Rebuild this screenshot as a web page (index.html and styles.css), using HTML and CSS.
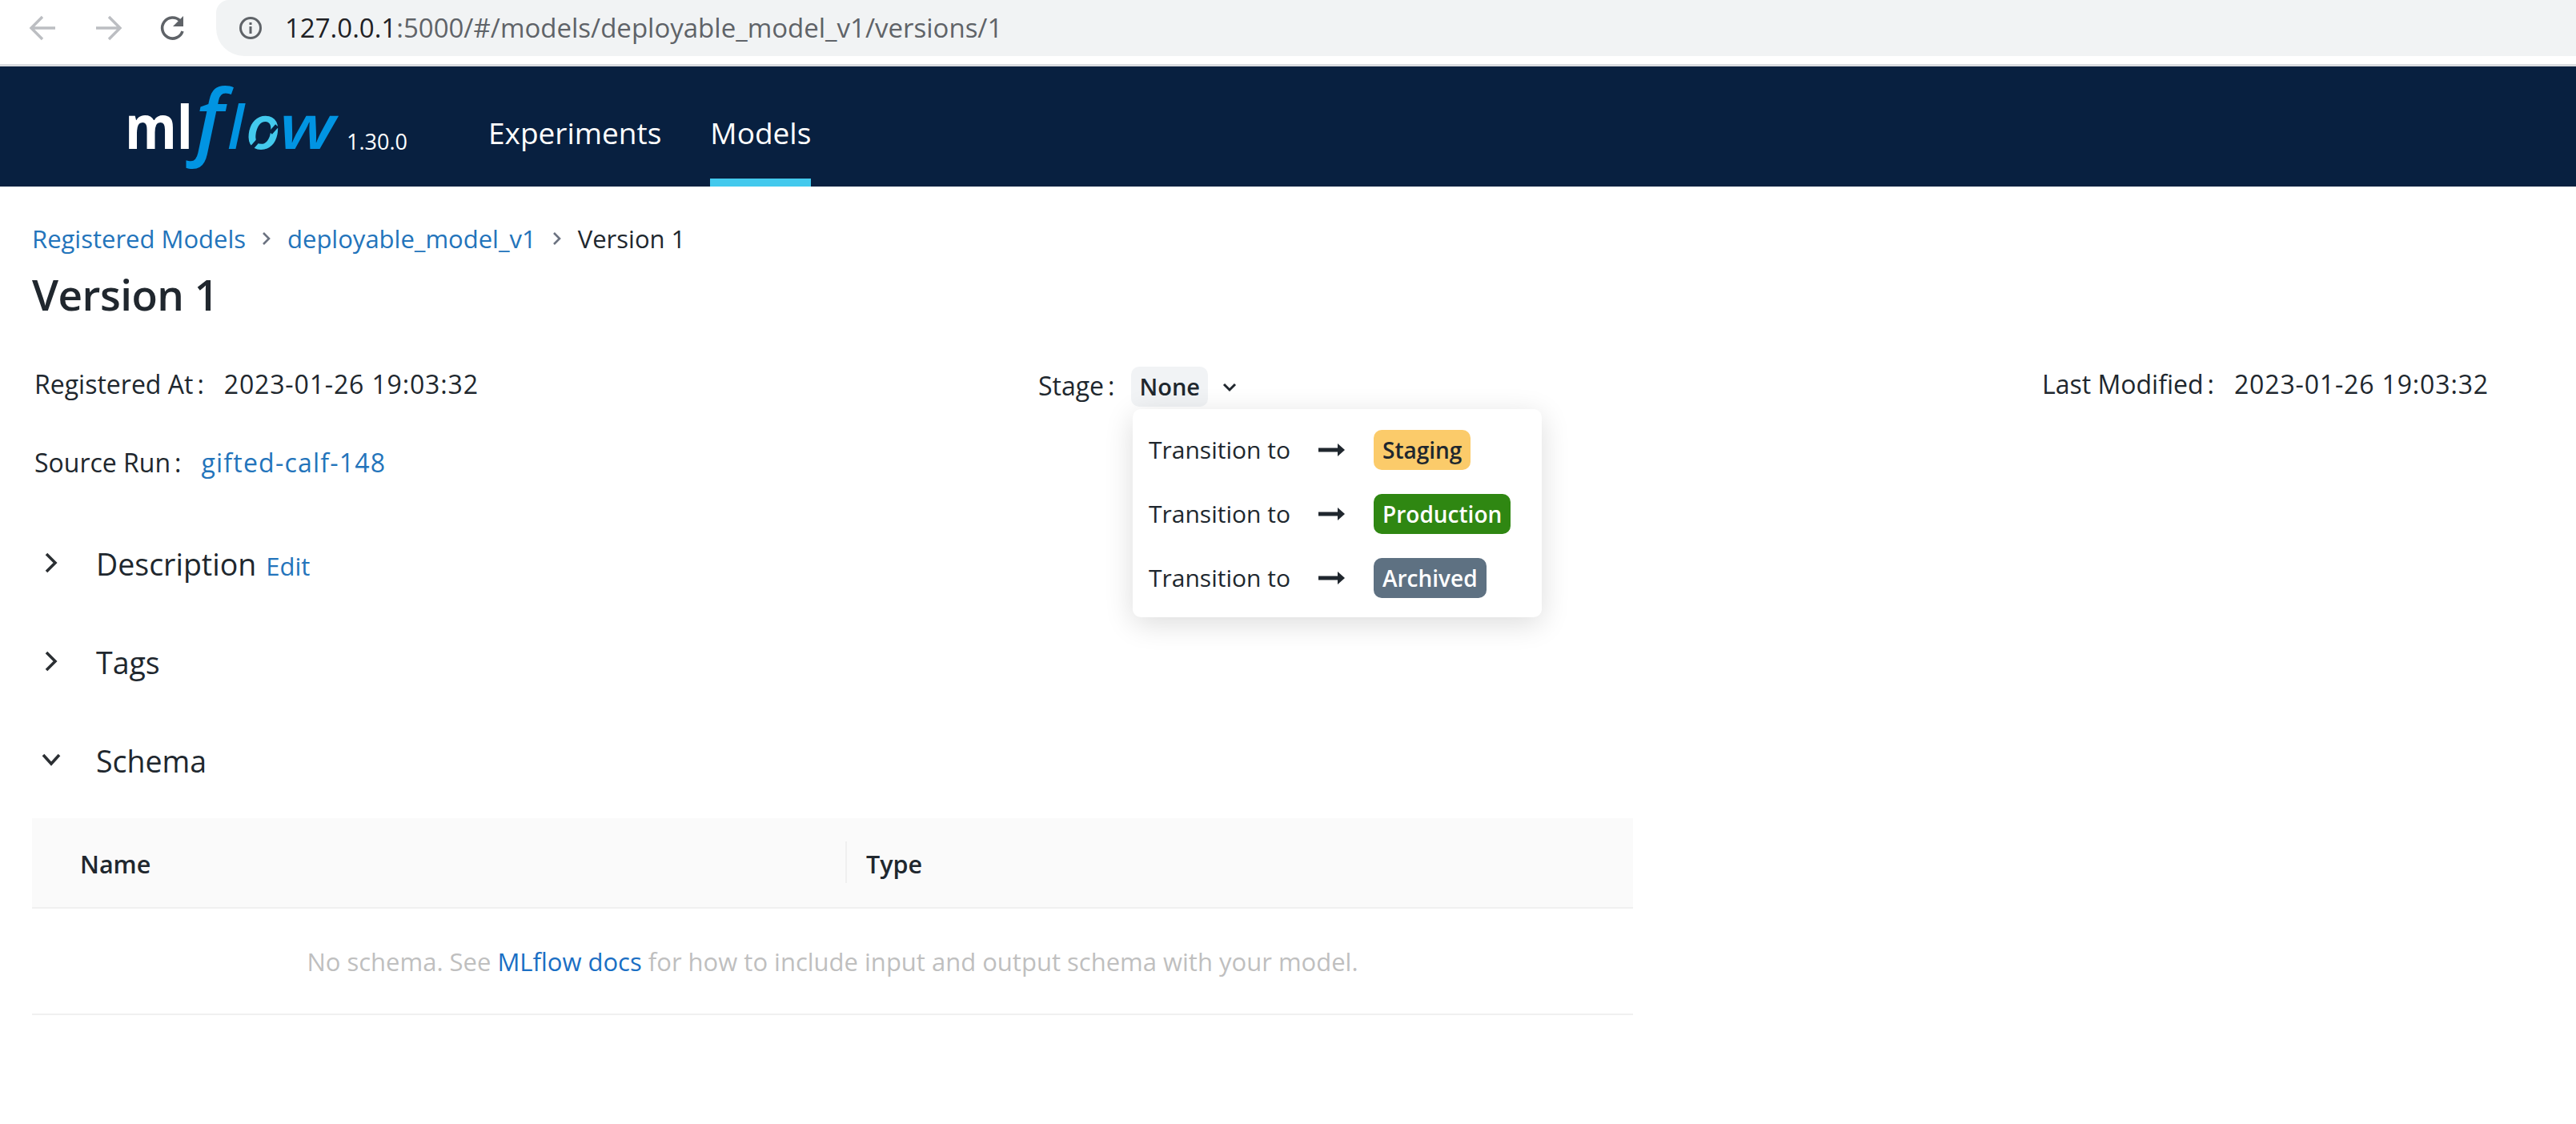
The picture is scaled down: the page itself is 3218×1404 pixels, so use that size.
FILE: index.html
```html
<!DOCTYPE html>
<html>
<head>
  <title>MLflow</title>
  <link rel="stylesheet" href="styles.css">
</head>
<body>
  <div class="chrome">
    <div class="chrome-buttons">
      <svg class="chrome-icon" width="40" height="40" viewBox="0 0 40 40"><path d="M35 20H6M19 6L5 20l14 14" fill="none" stroke="#bcbec2" stroke-width="3.4"/></svg>
      <svg class="chrome-icon" width="40" height="40" viewBox="0 0 40 40"><path d="M5 20h29M21 6l14 14-14 14" fill="none" stroke="#bcbec2" stroke-width="3.4"/></svg>
      <svg class="chrome-icon" width="40" height="40" viewBox="0 0 40 40"><path d="M32 24a13 13 0 1 1-3-13" fill="none" stroke="#5f6368" stroke-width="3.6"/><path d="M33 5v13H20z" fill="#5f6368"/></svg>
    </div>
    <div class="address">
      <svg class="info" width="30" height="30" viewBox="0 0 30 30"><circle cx="15" cy="15" r="12.5" fill="none" stroke="#5f6368" stroke-width="3"/><path d="M15 13v9M15 8v3" stroke="#5f6368" stroke-width="3"/></svg>
      <span class="url"><span class="host">127.0.0.1</span>:5000/#/models/deployable_model_v1/versions/1</span>
    </div>
  </div>

  <header class="nav">
    <div class="logo">
      <svg width="270" height="110" viewBox="0 0 270 110">
        <text class="logo-ml" x="-4" y="83" textLength="85" lengthAdjust="spacingAndGlyphs">ml</text>
        <text class="logo-f" x="84" y="83">f</text>
        <text class="logo-flow" x="124" y="83">l</text>
        <text class="logo-o" x="147" y="83">o</text>
        <text class="logo-flow" x="189" y="83" textLength="70" lengthAdjust="spacingAndGlyphs">w</text>
        <path d="M186 54l-8 9M163 72l-8 9" stroke="#082040" stroke-width="5"/>
      </svg>
      <span class="version">1.30.0</span>
    </div>
    <a class="nav-link">Experiments</a>
    <a class="nav-link nav-active">Models</a>
  </header>

  <main class="page">
    <div class="crumbs">
      <a class="link">Registered Models</a>
      <svg class="crumb-sep" width="12" height="18" viewBox="0 0 12 18"><path d="M2 2l7 7-7 7" fill="none" stroke="#6b7280" stroke-width="2.6"/></svg>
      <a class="link">deployable_model_v1</a>
      <svg class="crumb-sep" width="12" height="18" viewBox="0 0 12 18"><path d="M2 2l7 7-7 7" fill="none" stroke="#6b7280" stroke-width="2.6"/></svg>
      <span>Version 1</span>
    </div>
    <h1 class="title">Version 1</h1>

    <div class="meta">
      <div class="meta-item">Registered At<span class="colon">:</span><span class="date">2023-01-26 19:03:32</span></div>
      <div class="meta-item stage">
        Stage<span class="colon">:</span><span class="stage-chip">None</span>
        <svg class="stage-caret" width="18" height="12" viewBox="0 0 18 12"><path d="M2 2l7 7 7-7" fill="none" stroke="#20272e" stroke-width="3"/></svg>
        <div class="menu">
          <div class="menu-item">
            <span class="menu-label">Transition to</span>
            <svg class="menu-arrow" width="34" height="18" viewBox="0 0 34 18"><path d="M0 9h26" stroke="#20272e" stroke-width="5"/><path d="M24 1l9 8-9 8z" fill="#20272e"/></svg>
            <span class="tag tag-staging">Staging</span>
          </div>
          <div class="menu-item">
            <span class="menu-label">Transition to</span>
            <svg class="menu-arrow" width="34" height="18" viewBox="0 0 34 18"><path d="M0 9h26" stroke="#20272e" stroke-width="5"/><path d="M24 1l9 8-9 8z" fill="#20272e"/></svg>
            <span class="tag tag-production">Production</span>
          </div>
          <div class="menu-item">
            <span class="menu-label">Transition to</span>
            <svg class="menu-arrow" width="34" height="18" viewBox="0 0 34 18"><path d="M0 9h26" stroke="#20272e" stroke-width="5"/><path d="M24 1l9 8-9 8z" fill="#20272e"/></svg>
            <span class="tag tag-archived">Archived</span>
          </div>
        </div>
      </div>
      <div class="meta-item">Last Modified<span class="colon">:</span><span class="date">2023-01-26 19:03:32</span></div>
    </div>
    <div class="meta-item source">Source Run<span class="colon">:</span><a class="link run">gifted-calf-148</a></div>

    <section class="section section-first">
      <svg class="section-icon" width="24" height="26" viewBox="0 0 24 26"><path d="M6 2l11 11L6 24" fill="none" stroke="#2b2f33" stroke-width="3.6"/></svg>
      <span class="section-name">Description</span><a class="link edit">Edit</a>
    </section>
    <section class="section">
      <svg class="section-icon" width="24" height="26" viewBox="0 0 24 26"><path d="M6 2l11 11L6 24" fill="none" stroke="#2b2f33" stroke-width="3.6"/></svg>
      <span class="section-name">Tags</span>
    </section>
    <section class="section">
      <svg class="section-icon" width="24" height="26" viewBox="0 0 24 26"><path d="M2 7l10 11L22 7" fill="none" stroke="#2b2f33" stroke-width="3.6"/></svg>
      <span class="section-name">Schema</span>
    </section>

    <div class="schema">
      <div class="schema-head">
        <div class="schema-name">Name</div>
        <div class="schema-type">Type</div>
      </div>
      <div class="schema-empty">No schema. See <a class="docs">MLflow docs</a> for how to include input and output schema with your model.</div>
    </div>
  </main>
</body>
</html>
```

FILE: styles.css
```css
html, body {
  height: 100%;
}

body {
  margin: 0;
  background: white;
  color: #20272e;
  font-family: "Open Sans", "Liberation Sans", sans-serif;
  font-size: 32px;
  line-height: 44px;
}

/* browser bar */
.chrome {
  display: flex;
  height: 80px;
  border-bottom: 3px solid #dadce0;
}

.chrome-buttons {
  display: flex;
  gap: 41px;
  width: 270px;
  height: 70px;
  padding-left: 34px;
  box-sizing: border-box;
  align-items: center;
}

.chrome-icon {
  flex: none;
}

.address {
  display: flex;
  flex: 1;
  height: 70px;
  align-items: center;
  padding-left: 28px;
  background: #f1f3f4;
  border-radius: 16px 0 0 35px;
}

.url {
  margin-left: 28px;
  color: #5f6368;
  font-size: 33px;
}

.host {
  color: #202124;
}

/* nav */
.nav {
  display: flex;
  height: 150px;
  padding-left: 160px;
  background: #082040;
  color: white;
  box-sizing: border-box;
}

.logo {
  display: flex;
  width: 450px;
  align-items: center;
}

.logo svg {
  flex: none;
  overflow: visible;
}

.logo-ml {
  fill: white;
  font-size: 76px;
  font-weight: 700;
}

.logo-f {
  fill: #0194e2;
  font-size: 104px;
  font-weight: 600;
  font-style: italic;
}

.logo-flow {
  fill: #0194e2;
  font-size: 76px;
  font-weight: 600;
  font-style: italic;
}

.logo-o {
  fill: #43c9ed;
  font-size: 76px;
  font-weight: 600;
  font-style: italic;
}

.version {
  margin-top: 38px;
  margin-left: 3px;
  font-size: 27px;
}

.nav-link {
  height: 150px;
  margin-right: 61px;
  padding-top: 16px;
  font-size: 37px;
  line-height: 134px;
  box-sizing: border-box;
}

.nav-active {
  border-bottom: 10px solid #43c9ed;
}

/* page */
.page {
  padding: 43px 0 0 40px;
}

.link {
  color: #2374bb;
}

.crumbs {
  display: flex;
  align-items: center;
  font-size: 31px;
}

.crumb-sep {
  margin: 0 20px;
}

.title {
  margin: 16px 0 0;
  font-size: 53px;
  font-weight: 600;
  letter-spacing: -0.5px;
  line-height: 64px;
}

.meta {
  display: grid;
  grid-template-columns: 1254px 1254px auto;
  margin-top: 58px;
}

.meta-item {
  padding-left: 3px;
}

.date {
  letter-spacing: 0.85px;
}

.run {
  letter-spacing: 1.2px;
}

.colon {
  margin: 0 25px 0 5px;
}

.stage {
  position: relative;
}

.stage-chip {
  display: inline-block;
  margin-left: -4px;
  padding: 3px 10px;
  background: #f1f3f5;
  border-radius: 10px;
  font-size: 29px;
  font-weight: 600;
}

.stage-caret {
  margin-left: 10px;
  position: relative;
  top: -4px;
}

.menu {
  position: absolute;
  top: 53px;
  left: 121px;
  width: 511px;
  height: 260px;
  padding: 26px 0 0 20px;
  background: white;
  border-radius: 10px;
  box-sizing: border-box;
  box-shadow: 0 8px 36px rgba(0, 0, 0, 0.14);
}

.menu-item {
  display: flex;
  height: 50px;
  margin-bottom: 30px;
  align-items: center;
  font-size: 30px;
}

.menu-label {
  width: 212px;
}

.menu-arrow {
  margin-right: 35px;
}

.tag {
  height: 50px;
  padding: 0 11px;
  border-radius: 10px;
  font-weight: 600;
  font-size: 28px;
  line-height: 50px;
  box-sizing: border-box;
}

.tag-staging {
  background: #fbcb6a;
}

.tag-production {
  background: #2f8712;
  color: white;
}

.tag-archived {
  background: #5e7182;
  color: white;
}

.source {
  margin-top: 48px;
}

.section {
  position: relative;
  display: flex;
  height: 50px;
  margin-top: 73px;
  padding-left: 80px;
  align-items: baseline;
}

.section-first {
  margin-top: 80px;
}

.section-icon {
  position: absolute;
  top: 10px;
  left: 12px;
}

.section-name {
  font-size: 37.5px;
  line-height: 50px;
}

.edit {
  margin-left: 12px;
  font-size: 31px;
}

.schema {
  width: 2000px;
  margin-top: 46px;
}

.schema-head {
  display: grid;
  grid-template-columns: 1018px 982px;
  height: 113px;
  padding-top: 29px;
  background: #fafafa;
  border-bottom: 2px solid #f0f0f0;
  box-sizing: border-box;
  font-size: 30.5px;
  font-weight: 600;
}

.schema-name {
  height: 52px;
  padding: 6px 0 0 60px;
  box-sizing: border-box;
  border-right: 2px solid #f0f0f0;
}

.schema-type {
  height: 52px;
  padding: 6px 0 0 24px;
  box-sizing: border-box;
}

.schema-empty {
  height: 133px;
  padding-top: 44px;
  border-bottom: 2px solid #f0f0f0;
  color: #bfbfbf;
  box-sizing: border-box;
  font-size: 31px;
  text-align: center;
}

.docs {
  color: #1a6fc4;
}
```
